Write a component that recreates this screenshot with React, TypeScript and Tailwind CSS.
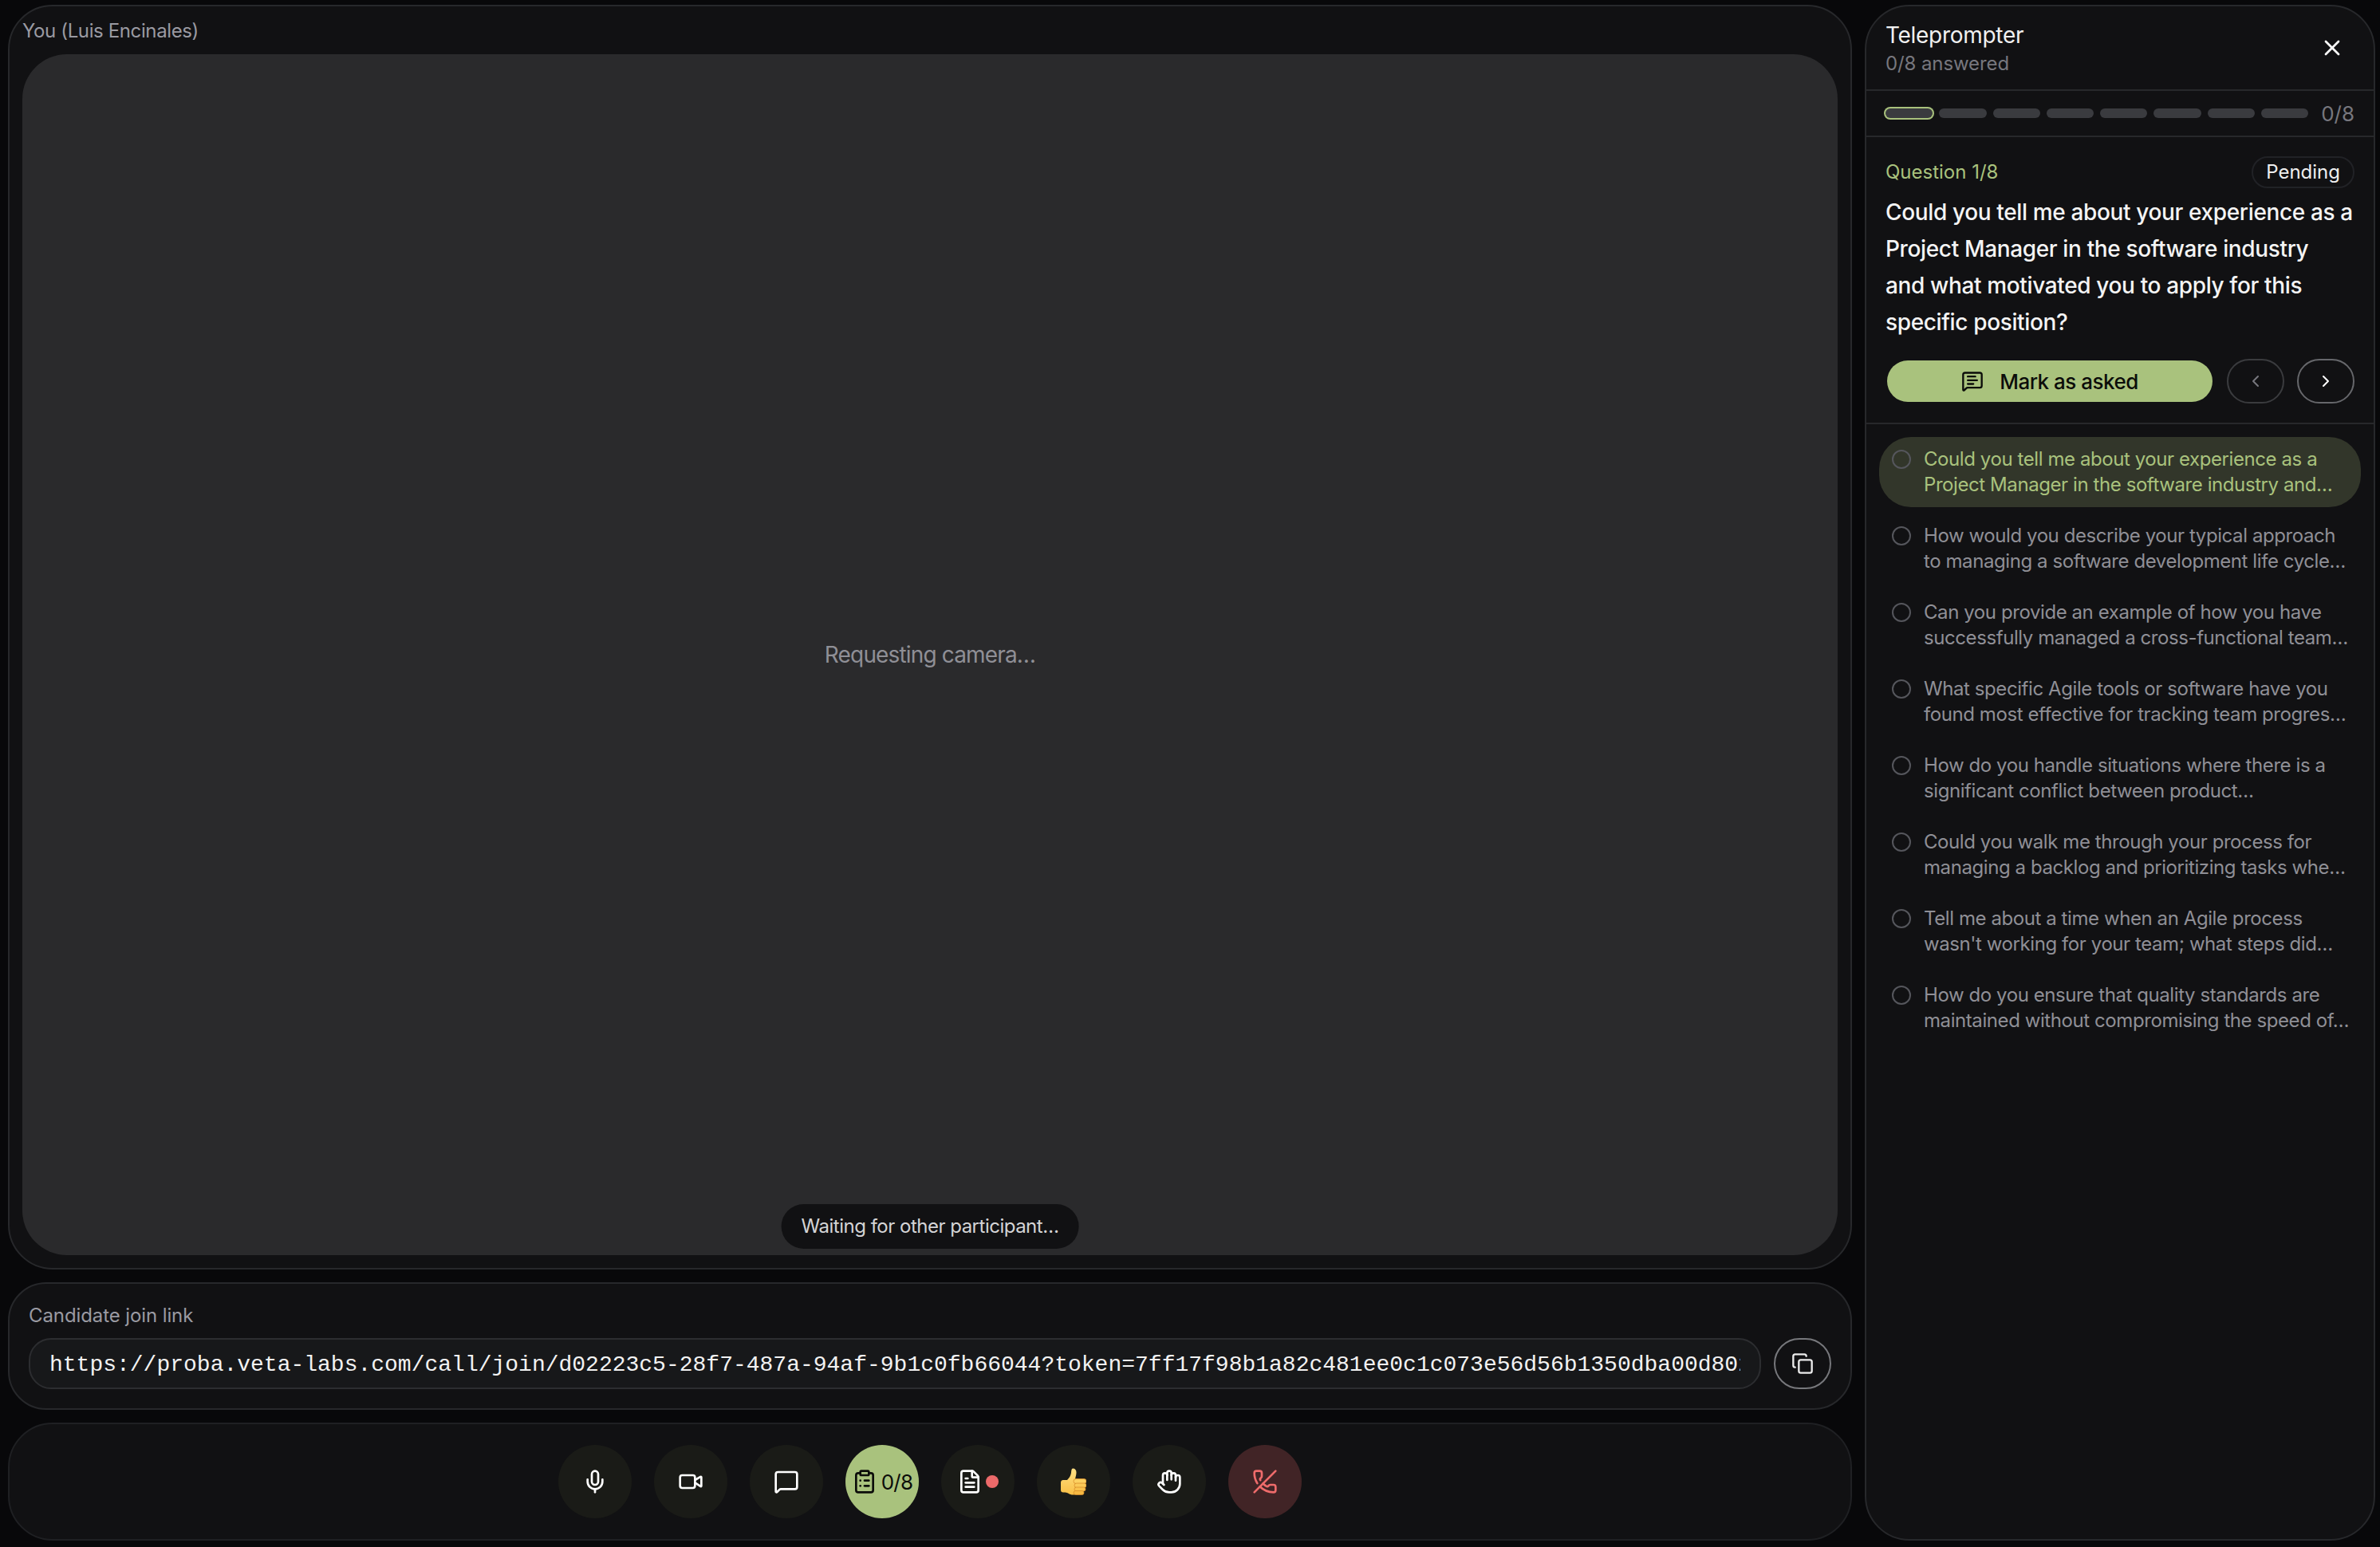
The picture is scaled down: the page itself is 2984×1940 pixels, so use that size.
import { ChevronLeft, ChevronRight, ClipboardList, Copy, FileText, Hand, MessageSquare, MessageSquareText, Mic, PhoneOff, Video, X } from "lucide-react";

const questions = [
  ["Could you tell me about your experience as a", "Project Manager in the software industry and…"],
  ["How would you describe your typical approach", "to managing a software development life cycle…"],
  ["Can you provide an example of how you have", "successfully managed a cross-functional team…"],
  ["What specific Agile tools or software have you", "found most effective for tracking team progres…"],
  ["How do you handle situations where there is a", "significant conflict between product…"],
  ["Could you walk me through your process for", "managing a backlog and prioritizing tasks whe…"],
  ["Tell me about a time when an Agile process", "wasn't working for your team; what steps did…"],
  ["How do you ensure that quality standards are", "maintained without compromising the speed of…"],
];

const joinLink =
  "https://proba.veta-labs.com/call/join/d02223c5-28f7-487a-94af-9b1c0fb66044?token=7ff17f98b1a82c481ee0c1c073e56d56b1350dba00d802c4";

function ThumbsUp() {
  return (
    <svg width="32" height="34" viewBox="0 0 32 34">
      <defs>
        <linearGradient id="thumb" x1="0" y1="0" x2="0" y2="1">
          <stop offset="0" stopColor="#ffe083" />
          <stop offset="1" stopColor="#f9bf45" />
        </linearGradient>
      </defs>
      <path d="M15 0.500c3 0 4.500 2 4.500 5 0 3-1 5.500-1.500 8.500v19c-3 1-6 .5-8-1-2-1.200-4-1.500-7-1.500C1 30.500 0 29.500 0 27.500v-9c0-2 1-3.500 3-3.500h5c2.500-2.500 4.500-5.500 5-9 .2-2.500 .5-5.500 2-5.500z" fill="url(#thumb)" />
      <rect x="16" y="13.500" width="16" height="6" rx="3" fill="#fcd162" stroke="#d98f2b" strokeWidth="0.8" />
      <rect x="17" y="19" width="15" height="5.500" rx="2.750" fill="#fbca57" stroke="#d98f2b" strokeWidth="0.8" />
      <rect x="17" y="24" width="14" height="5" rx="2.500" fill="#f9c24c" stroke="#d98f2b" strokeWidth="0.8" />
      <rect x="16" y="28.500" width="13" height="5" rx="2.500" fill="#f6b942" stroke="#d98f2b" strokeWidth="0.8" />
    </svg>
  );
}

function RoundButton({ className, children }: { className?: string; children: React.ReactNode }) {
  return (
    <button className={`flex h-[92px] w-[92px] items-center justify-center rounded-full ${className ?? "bg-[#1a1b17] text-white"}`}>
      {children}
    </button>
  );
}

export default function App() {
  return (
    <div className="flex h-screen gap-4 overflow-hidden bg-[#08080a] pt-1.5 pr-1.5 pb-2 pl-2.5 font-['Inter','Liberation_Sans',sans-serif]">
      <div className="flex min-w-0 flex-1 flex-col">
        <section className="flex min-h-0 flex-1 flex-col rounded-[56px] border-2 border-[#27282b] bg-[#111113] px-4 pb-4">
          <div className="flex h-[60px] items-center pt-0.5 text-[24px] tracking-[-0.38px] text-[#9a9aa2]">You (Luis Encinales)</div>
          <div className="relative flex min-h-0 flex-1 items-center justify-center rounded-[56px] bg-[#2a2a2c]">
            <span className="text-[28px] tracking-[-0.85px] text-[#8f8f96]">Requesting camera…</span>
            <span className="absolute bottom-2 left-1/2 flex h-14 -translate-x-1/2 items-center rounded-full bg-[#111113] px-[25px] text-[24px] tracking-[-0.5px] text-[#d4d4d6]">
              Waiting for other participant…
            </span>
          </div>
        </section>

        <section className="mt-4 h-[160px] rounded-[48px] border-2 border-[#27282b] bg-[#111113] px-6">
          <div className="flex h-[68px] items-end pb-2.5 text-[24px] tracking-[-0.1px] text-[#9a9aa2]">Candidate join link</div>
          <div className="flex gap-4">
            <div className="flex h-16 min-w-0 flex-1 items-center rounded-[28px] border-2 border-[#2c2d30] bg-[#17181a] px-6 pt-1">
              <input
                readOnly
                value={joinLink}
                className="w-full bg-transparent font-['Liberation_Mono',monospace] text-[28px] text-[#f2f2f2] outline-none"
              />
            </div>
            <button className="flex h-16 w-[72px] items-center justify-center rounded-full border-2 border-[#77787c] text-[#ececec]">
              <Copy size={28} strokeWidth={2} />
            </button>
          </div>
        </section>

        <section className="mt-4 flex h-[148px] items-center justify-center gap-7 rounded-[56px] border-2 border-[#1f2023] bg-[#111113]">
          <RoundButton><Mic size={32} strokeWidth={2} /></RoundButton>
          <RoundButton><Video size={32} strokeWidth={2} /></RoundButton>
          <RoundButton><MessageSquare size={32} strokeWidth={2} /></RoundButton>
          <RoundButton className="gap-[5px] bg-[#a9c27d] text-[#0c0d0a]">
            <ClipboardList size={32} strokeWidth={2} className="shrink-0" />
            <span className="text-[26px] tracking-[-0.8px]">0/8</span>
          </RoundButton>
          <RoundButton className="gap-1 bg-[#1a1b17] text-white">
            <FileText size={32} strokeWidth={2} />
            <span className="h-4 w-4 rounded-full bg-[#ec6a6a]" />
          </RoundButton>
          <RoundButton><ThumbsUp /></RoundButton>
          <RoundButton><Hand size={32} strokeWidth={2} /></RoundButton>
          <RoundButton className="bg-[#412426] text-[#ee6b6b]"><PhoneOff size={32} strokeWidth={2} /></RoundButton>
        </section>
      </div>

      <aside className="flex w-[640px] shrink-0 flex-col rounded-[56px] border-2 border-[#27282b] bg-[#111113]">
        <header className="flex h-[106px] shrink-0 items-center justify-between border-b-2 border-[#27282b] px-6">
          <div className="pt-0.5">
            <div className="text-[28px] leading-9 tracking-[-0.3px] text-[#f0f0f0]">Teleprompter</div>
            <div className="mt-0.5 text-[24px] leading-8 tracking-[-0.1px] text-[#77777e]">0/8 answered</div>
          </div>
          <X size={32} strokeWidth={2} className="mr-3 text-white" />
        </header>
        <div className="flex h-[58px] shrink-0 items-center gap-2 border-b-2 border-[#27282b] px-6">
          {Array.from({ length: 8 }).map((_, i) => (
            <span key={i} className={`h-3 flex-1 rounded-full bg-[#3a3b3f] ${i === 0 ? "ring-2 ring-[#a9c27d]" : ""}`} />
          ))}
          <span className="ml-2 text-[26px] text-[#77777e]">0/8</span>
        </div>
        <div className="shrink-0 border-b-2 border-[#27282b] px-6 pt-[24px] pb-[24px]">
          <div className="flex items-center justify-between">
            <span className="text-[24px] text-[#a9c27d]">Question 1/8</span>
            <span className="flex h-10 items-center rounded-full border-2 border-[#212226] px-4 text-[24px] text-[#eeeeee]">Pending</span>
          </div>
          <p className="mt-[7px] text-[28px] leading-[46px] font-medium tracking-[-0.36px] whitespace-nowrap text-[#f4f4f4]">
            Could you tell me about your experience as a
            <br />
            Project Manager in the software industry
            <br />
            and what motivated you to apply for this
            <br />
            specific position?
          </p>
          <div className="mt-[23px] flex items-center gap-4">
            <button className="mr-0.5 ml-0.5 flex h-[52px] flex-1 items-center justify-center gap-5 rounded-full bg-[#a9c27d] text-[26px] font-medium tracking-[-0.5px] text-[#0c0d0a]">
              <MessageSquareText size={28} strokeWidth={2} />
              Mark as asked
            </button>
            <button className="flex h-14 w-[72px] items-center justify-center rounded-full border-2 border-[#3a3b3e] text-[#77777e]">
              <ChevronLeft size={24} strokeWidth={2} />
            </button>
            <button className="flex h-14 w-[72px] items-center justify-center rounded-full border-2 border-[#66676b] text-white">
              <ChevronRight size={24} strokeWidth={2} />
            </button>
          </div>
        </div>
        <ul className="flex flex-col gap-2 px-4 pt-[16px]">
          {questions.map((q, i) => (
            <li
              key={i}
              className={`flex h-[88px] gap-4 rounded-[40px] py-3 pl-4 text-[24px] leading-8 tracking-[-0.42px] whitespace-nowrap ${
                i === 0 ? "bg-[#32362a] text-[#a9c27d]" : "text-[#8f8f96]"
              }`}
            >
              <span className="mt-1 h-6 w-6 shrink-0 rounded-full border-2 border-[#55565c]" />
              <div>
                {q[0]}
                <br />
                {q[1]}
              </div>
            </li>
          ))}
        </ul>
      </aside>
    </div>
  );
}
